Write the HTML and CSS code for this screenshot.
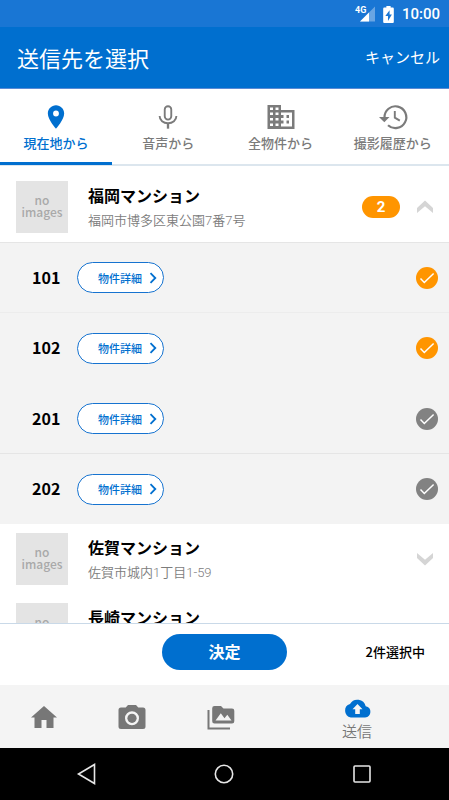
FILE: index.html
```html
<!DOCTYPE html>
<html lang="ja">
<head>
<meta charset="utf-8">
<meta name="viewport" content="width=device-width, initial-scale=1">
<title>送信先を選択</title>
<link rel="stylesheet" href="styles.css">
</head>
<body>
<svg class="defs" aria-hidden="true">
  <symbol id="check" viewBox="0 0 22 22"><path d="M4.500 11.600l3.800 3.900 9.300-9" fill="none" stroke="#fff" stroke-width="1.500"/></symbol>
  <symbol id="next" viewBox="0 0 8 12"><path d="M1.500 1.200L6.300 6l-4.800 4.800" fill="none" stroke="currentColor" stroke-width="1.800"/></symbol>
  <symbol id="chevron" viewBox="0 0 16 14"><path d="M0 8L8 .5 16 8v5L8 6.200 0 13z" fill="currentColor"/></symbol>
</svg>
<div class="screen">
  <div class="status">
    <svg width="20" height="18" viewBox="0 0 20 18" role="img" aria-label="4G">
      <path d="M20 1.500v15H5z" fill="#fff" opacity=".35"/>
      <path d="M14 7.500v9H5z" fill="#fff"/>
      <text x="0" y="8" class="signal-text">4G</text>
    </svg>
    <svg width="11" height="17" viewBox="0 0 10 16" aria-hidden="true">
      <path fill="#fff" fill-rule="evenodd" d="M3 0h4v1.500h2q1 0 1 1V15q0 1-1 1H1q-1 0-1-1V2.500q0-1 1-1h2zM6 4L2 9.500h2.500V14L8.200 8H6z"/>
    </svg>
    <span class="clock">10:00</span>
  </div>
  <header class="header">
    <h1 class="title">送信先を選択</h1>
    <button type="button" class="cancel">キャンセル</button>
  </header>
  <nav class="tabs">
    <button type="button" class="tab tab-active">
      <svg width="28" height="28" viewBox="0 0 24 24" aria-hidden="true"><path d="M12 2C8.130 2 5 5.130 5 9c0 5.250 7 13 7 13s7-7.750 7-13c0-3.870-3.130-7-7-7zm0 9.500a2.500 2.500 0 1 1 0-5 2.500 2.500 0 0 1 0 5z"/></svg>
      現在地から
    </button>
    <button type="button" class="tab">
      <svg width="28" height="28" viewBox="0 0 24 24" aria-hidden="true"><g fill="none" stroke="currentColor" stroke-width="1.600"><rect x="9.200" y="2.800" width="5.600" height="11.400" rx="2.800"/><path d="M4.800 11.200c0 3.600 3.200 6.200 7.200 6.200s7.200-2.600 7.200-6.200"/><path d="M12 17.400V22" stroke-width="2"/></g></svg>
      音声から
    </button>
    <button type="button" class="tab">
      <svg width="32" height="28" viewBox="0 0 32 28" aria-hidden="true"><path fill-rule="evenodd" d="M2.500 2H16v5h13.500v19h-27zM5 4.500V7h3V4.500zm5.500 0V7h3V4.500zM5 9.500V12h3V9.500zm5.500 0V12h3V9.500zM5 15v2.500h3V15zm5.500 0v2.500h3V15zM5 20.500V23h3v-2.500zm5.500 0V23h3v-2.500zM16 9.500V12h2.500v3H16v2.500h2.500v3H16v3h11v-14zm5.500 2.500H24v3h-2.500zm0 5.500H24v3h-2.500z"/></svg>
      全物件から
    </button>
    <button type="button" class="tab">
      <svg width="32" height="28" viewBox="0 0 32 28" aria-hidden="true"><g fill="none" stroke="currentColor" stroke-width="2.200"><path d="M7.500 14.500A10.900 10.900 0 1 1 11 22.200"/><path d="M17.800 8v6.600l5 3" stroke-width="1.900"/></g><path d="M2 14h10.500l-5.200 5.300z"/></svg>
      撮影履歴から
    </button>
  </nav>
  <main class="list">
    <section class="building building-first">
      <div class="thumb">no<br>images</div>
      <div class="info"><h2 class="name">福岡マンション</h2><p class="address">福岡市博多区東公園7番7号</p></div>
      <span class="count">2</span>
      <button type="button" class="toggle" aria-label="閉じる"><svg width="16" height="14"><use href="#chevron"/></svg></button>
    </section>
    <ul class="rooms">
      <li class="room">
        <label class="number" for="r101">101</label>
        <button type="button" class="detail">物件詳細<svg width="8" height="12"><use href="#next"/></svg></button>
        <span class="pick"><input type="checkbox" id="r101" checked><svg width="22" height="22"><use href="#check"/></svg></span>
      </li>
      <li class="room">
        <label class="number" for="r102">102</label>
        <button type="button" class="detail">物件詳細<svg width="8" height="12"><use href="#next"/></svg></button>
        <span class="pick"><input type="checkbox" id="r102" checked><svg width="22" height="22"><use href="#check"/></svg></span>
      </li>
      <li class="room">
        <label class="number" for="r201">201</label>
        <button type="button" class="detail">物件詳細<svg width="8" height="12"><use href="#next"/></svg></button>
        <span class="pick"><input type="checkbox" id="r201"><svg width="22" height="22"><use href="#check"/></svg></span>
      </li>
      <li class="room">
        <label class="number" for="r202">202</label>
        <button type="button" class="detail">物件詳細<svg width="8" height="12"><use href="#next"/></svg></button>
        <span class="pick"><input type="checkbox" id="r202"><svg width="22" height="22"><use href="#check"/></svg></span>
      </li>
    </ul>
    <section class="building">
      <div class="thumb">no<br>images</div>
      <div class="info"><h2 class="name">佐賀マンション</h2><p class="address">佐賀市城内1丁目1-59</p></div>
      <button type="button" class="toggle toggle-down" aria-label="開く"><svg width="16" height="14"><use href="#chevron"/></svg></button>
    </section>
    <section class="building">
      <div class="thumb">no<br>images</div>
      <div class="info"><h2 class="name">長崎マンション</h2></div>
    </section>
  </main>
  <div class="actions">
    <button type="button" class="submit">決定</button>
    <span class="selected">2件選択中</span>
  </div>
  <nav class="bottom">
    <a href="#" class="item" aria-label="ホーム"><svg width="30" height="30" viewBox="0 0 30 30"><path d="M15 4L2 15.500h3.500V26h7v-8h5v8h7V15.500H28z"/></svg></a>
    <a href="#" class="item" aria-label="カメラ"><svg width="30" height="30" viewBox="0 0 30 30"><path fill-rule="evenodd" d="M11 3h8l2.300 2.600H26q2.500 0 2.500 2.500v16.400Q28.500 27 26 27H4q-2.500 0-2.500-2.500V8.100Q1.500 5.600 4 5.600h4.700zm4 6.300a7 7 0 1 0 0 14 7 7 0 0 0 0-14z"/><circle cx="15" cy="16.300" r="4.600"/></svg></a>
    <a href="#" class="item" aria-label="アルバム"><svg width="30" height="30" viewBox="0 0 30 30"><path d="M2.500 8v18.500H24" fill="none" stroke="currentColor" stroke-width="2"/><path fill-rule="evenodd" d="M8.500 4H15l2.500 2.500H26q2.300 0 2.300 2.300v10.400q0 2.300-2.300 2.300H8.500q-2.300 0-2.300-2.300V6.300Q6.200 4 8.500 4zM9.500 18.500h16l-4.200-5.800-2.800 3.500-3.700-5z"/></svg></a>
    <a href="#" class="item item-active">
      <svg class="cloud" width="27" height="19" viewBox="0 0 27 19" aria-hidden="true"><path fill-rule="evenodd" d="M21.700 7.200A8.500 8.500 0 0 0 6 5.100 6.900 6.900 0 0 0 6.800 18.500h14.300a5.700 5.700 0 0 0 .6-11.300zM13.500 5l5 5.300h-2.700V15h-4.600v-4.700H8.500z"/></svg>
      <span>送信</span>
    </a>
  </nav>
  <div class="system">
    <button type="button" class="key" aria-label="戻る"><svg width="22" height="22" viewBox="0 0 22 22"><path d="M18.500 1.500v19L2.500 11z"/></svg></button>
    <button type="button" class="key" aria-label="ホーム"><svg width="22" height="22" viewBox="0 0 22 22"><circle cx="11" cy="11" r="8.700"/></svg></button>
    <button type="button" class="key" aria-label="履歴"><svg width="22" height="22" viewBox="0 0 22 22"><rect x="3" y="3" width="16" height="16" rx="1"/></svg></button>
  </div>
</div>
</body>
</html>
```
FILE: styles.css
```css
* { box-sizing: border-box; }

body {
  margin: 0;
  font-family: "Noto Sans CJK JP", "Noto Sans", sans-serif;
  color: #000;
  background: #fff;
}

h1, h2, p, ul { margin: 0; padding: 0; }

button {
  border: 0;
  padding: 0;
  background: none;
  color: inherit;
  font: inherit;
}

svg { display: block; fill: currentColor; flex: none; }

.defs { position: absolute; width: 0; height: 0; }

.screen {
  display: flex;
  flex-direction: column;
  height: 100vh;
}

.status {
  flex: none;
  display: flex;
  align-items: center;
  justify-content: flex-end;
  gap: 8px;
  height: 27px;
  padding: 1px 9px 0 0;
  background: #1976d4;
  color: #fff;
}

.signal-text { font: bold 9px Roboto, sans-serif; fill: #fff; }
.clock { font: 500 15px/20px Roboto, sans-serif; }

.header {
  flex: none;
  display: flex;
  align-items: center;
  justify-content: space-between;
  height: 62px;
  padding: 0 9px 2px 17px;
  background: #006fcf;
  border-bottom: 1px solid #5b8bd5;
  color: #fff;
}

.title { font-size: 22px; line-height: 32px; font-weight: 400; }
.cancel { font-size: 15px; line-height: 22px; }

.tabs {
  flex: none;
  display: grid;
  grid-template-columns: repeat(4, 1fr);
  height: 77px;
  border-bottom: 2px solid #dce6ee;
}

.tab {
  display: flex;
  flex-direction: column;
  align-items: center;
  gap: 2px;
  height: 76px;
  padding-top: 14px;
  border-bottom: 3px solid transparent;
  color: #7b7b7b;
  font-size: 13px;
  line-height: 20px;
  font-weight: 500;
}

.tab-active { color: #006fcf; border-color: #006fcf; }

.list { flex: 1; min-height: 0; overflow: hidden; }

.building {
  display: flex;
  align-items: center;
  height: 70px;
  padding: 0 16px;
}

.building-first { height: 76px; padding-top: 6px; }

.thumb {
  flex: none;
  width: 52px;
  height: 52px;
  padding-top: 13px;
  background: #e4e4e4;
  color: #a9a9a9;
  font-size: 12px;
  line-height: 12px;
  font-weight: 500;
  text-align: center;
}

.info { flex: 1; align-self: flex-start; padding: 11px 0 0 20px; }
.name { font-size: 16px; line-height: 24px; font-weight: 700; }
.address {
  margin-top: 4px;
  color: #7c7c7c;
  font: 400 13px/20px Roboto, "Noto Sans CJK JP", sans-serif;
  font-weight: 350;
}

.count {
  width: 38px;
  margin-right: 17px;
  border-radius: 11px;
  background: #ff9500;
  color: #fff;
  font: 700 15px/22px Roboto, sans-serif;
  text-align: center;
}

.toggle { color: #d5d5d5; }
.toggle-down svg { transform: rotate(180deg); }

.rooms { list-style: none; background: #f3f3f3; }

.room {
  display: flex;
  align-items: center;
  height: 70px;
  padding: 0 11px 0 32px;
  border-top: 1px solid #e5e5e5;
}

.room:nth-child(even) { height: 71px; }
.room:nth-child(2) { border-color: #ececec; }
.room:nth-child(3) { border-color: #f3f3f3; }

.number { width: 45px; padding-bottom: 2px; font-size: 16px; line-height: 24px; font-weight: 700; }

.detail {
  display: flex;
  align-items: center;
  justify-content: flex-end;
  gap: 7px;
  width: 87px;
  height: 31px;
  padding-right: 6px;
  border: 1px solid #1673d0;
  border-radius: 16px;
  background: #fff;
  color: #006fcf;
  font-size: 11px;
  line-height: 16px;
  font-weight: 500;
}

.pick { display: grid; margin-left: auto; }
.pick > * { grid-area: 1 / 1; }
.pick svg { pointer-events: none; z-index: 1; }

.pick input {
  appearance: none;
  width: 22px;
  height: 22px;
  margin: 0;
  border-radius: 50%;
  background: #828282;
}

.pick input:checked { background: #ff9500; }

.actions {
  flex: none;
  display: grid;
  grid-template-columns: 1fr 125px 1fr;
  align-items: center;
  height: 62px;
  padding-bottom: 6px;
  border-top: 1px solid #c9d9e8;
}

.submit {
  grid-column: 2;
  height: 36px;
  padding-bottom: 2px;
  border-radius: 18px;
  background: #006fcf;
  color: #fff;
  font-size: 16px;
  line-height: 24px;
  font-weight: 700;
}

.selected {
  justify-self: end;
  padding-right: 24px;
  font-size: 13px;
  line-height: 20px;
  font-weight: 500;
}

.bottom {
  flex: none;
  display: grid;
  grid-template-columns: 87fr 90fr 88fr 184fr;
  height: 63px;
  background: #f4f4f4;
}

.item {
  display: flex;
  flex-direction: column;
  align-items: center;
  justify-content: center;
  color: #777;
  font-size: 15px;
  line-height: 22px;
  font-weight: 350;
  text-decoration: none;
}

.item-active { padding-top: 6px; }
.cloud { margin: 2px 0; color: #006fcf; }

.system {
  flex: none;
  display: grid;
  grid-template-columns: repeat(3, 1fr);
  height: 52px;
  padding: 0 18px;
  background: #000;
}

.key { display: grid; place-items: center; }
.key svg { fill: none; stroke: #e6e6e6; stroke-width: 1.6; }
```
